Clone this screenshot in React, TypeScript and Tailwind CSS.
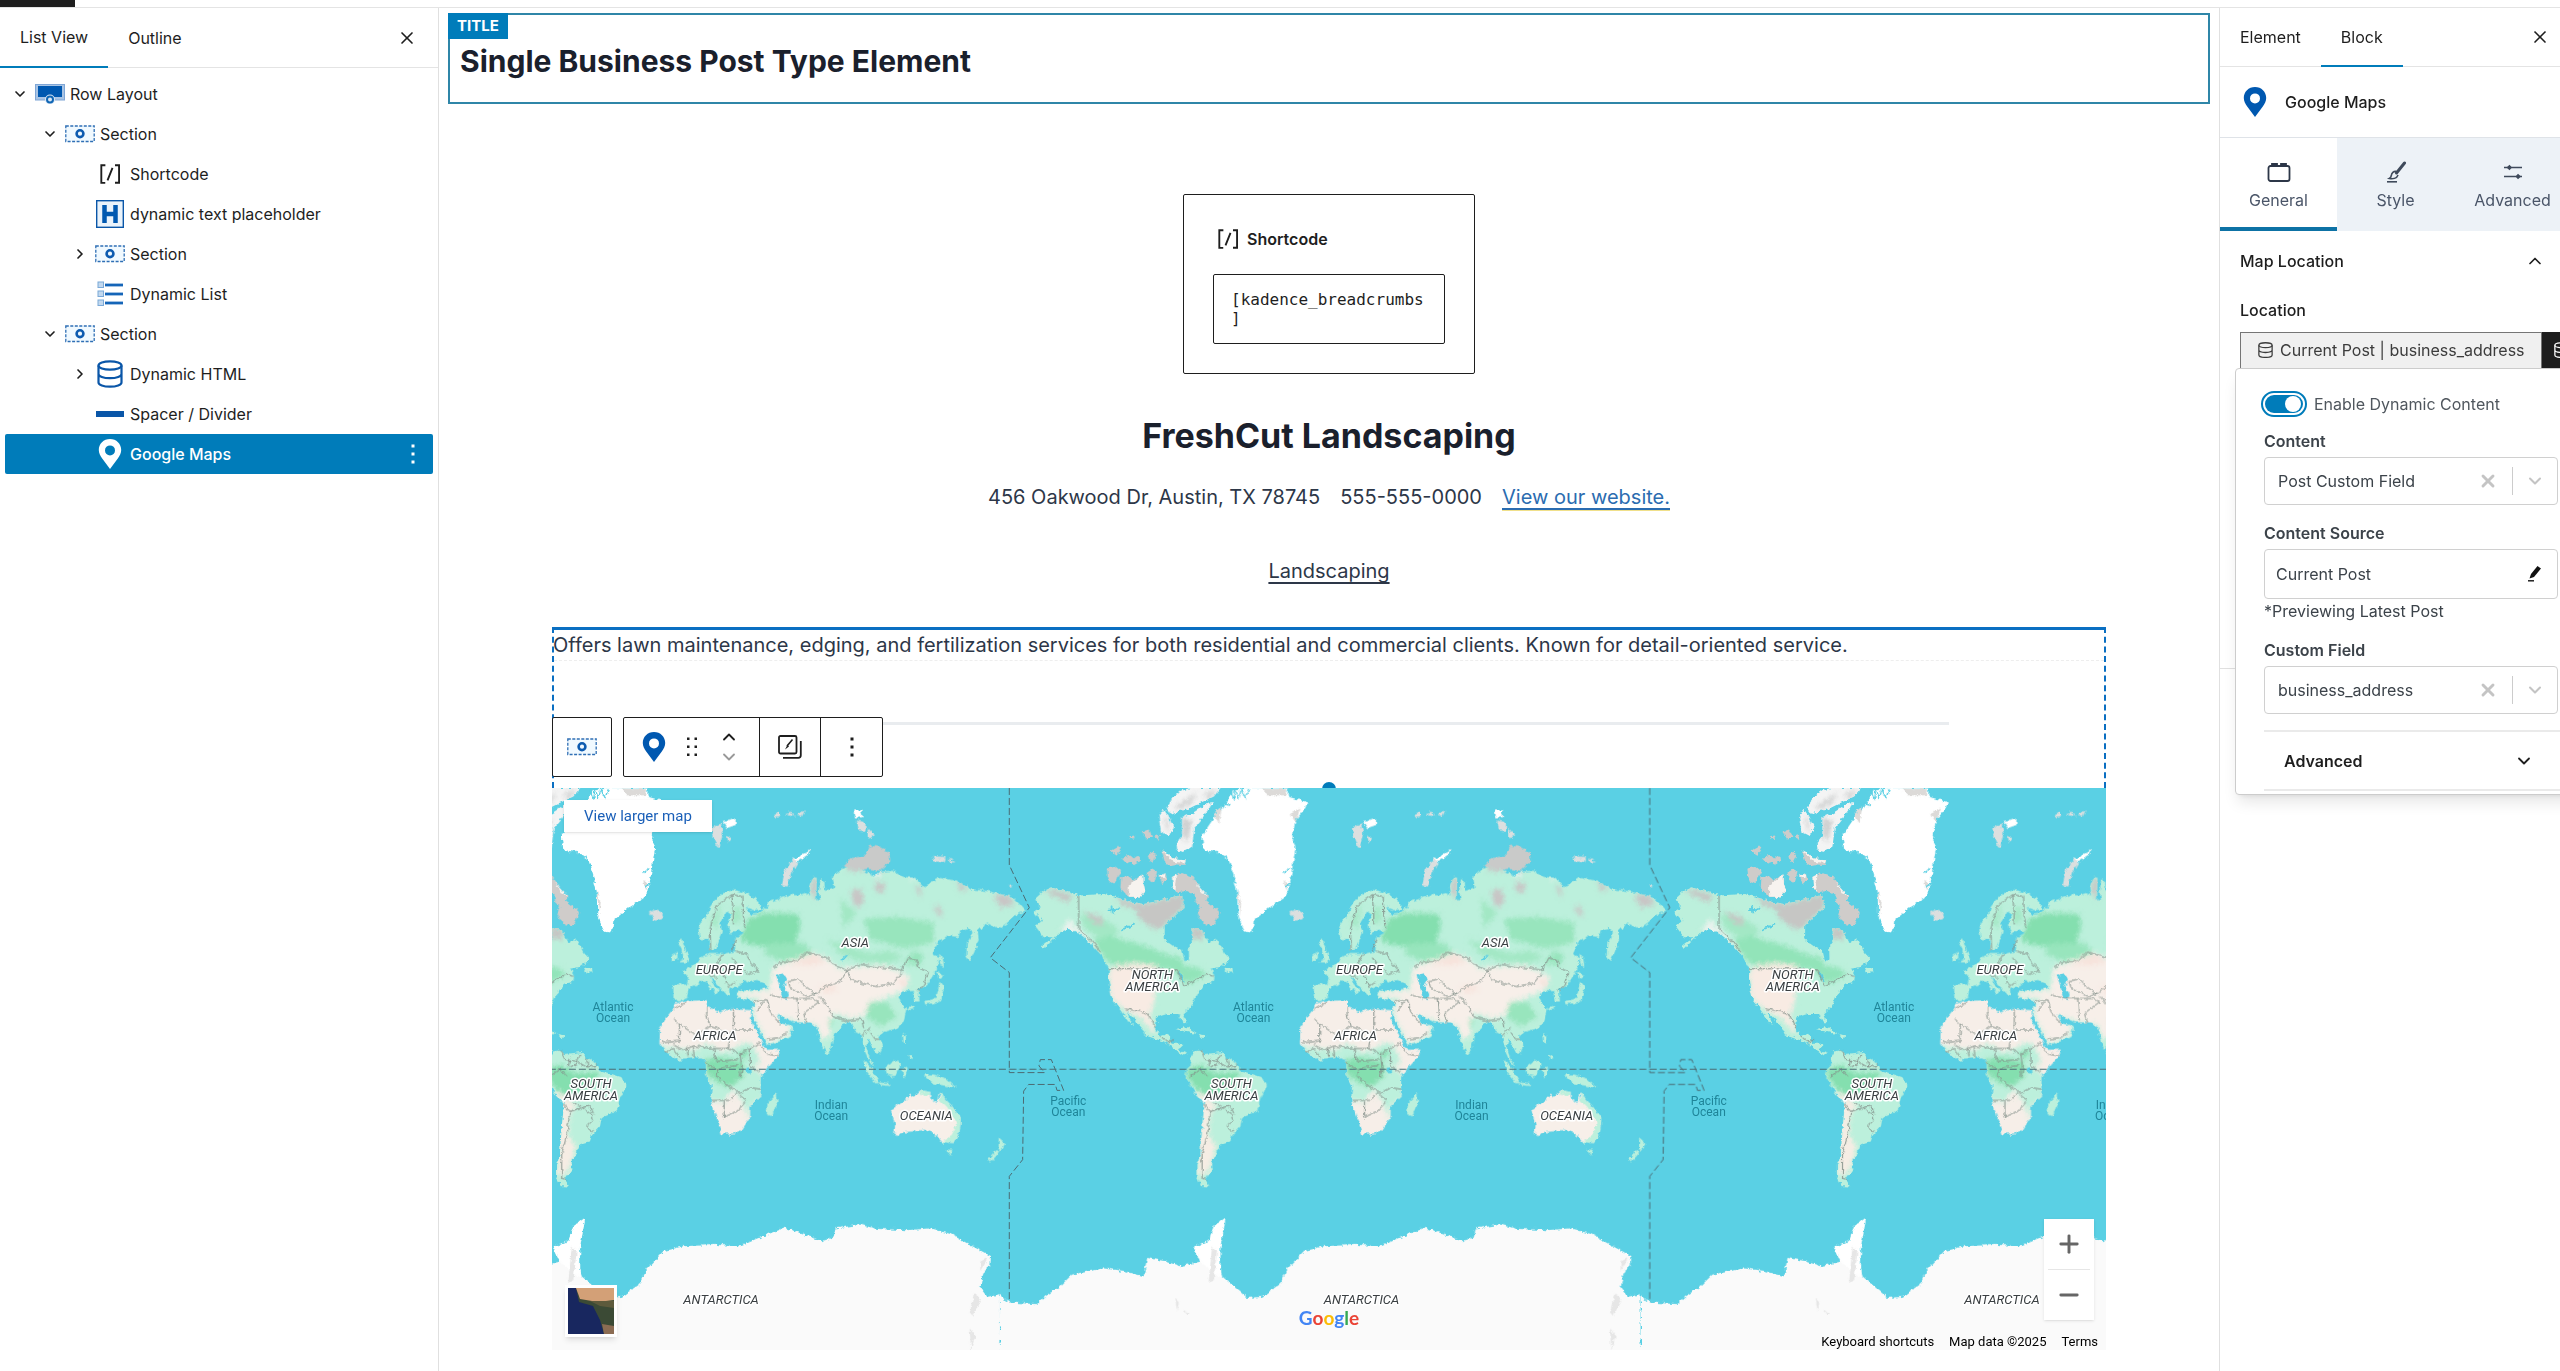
import { ReactNode, useState } from "react";
import { ChevronDown, ChevronRight, ChevronUp, Minus, Plus, X } from "lucide-react";

type IconProps = { className?: string };

/* ---------- Icons ---------- */

function PinIcon({ className }: IconProps) {
  return (
    <svg viewBox="0 0 24 30" className={className} fill="currentColor" aria-hidden="true">
      <path fillRule="evenodd" d="M12 0C5.6 0 .8 4.900.8 11c0 3.200 1.600 6 3.400 8.600L12 30l7.800-10.400C21.600 17 23.200 14.200 23.200 11 23.200 4.900 18.400 0 12 0Zm0 6.400a5 5 0 1 1 0 10 5 5 0 0 1 0-10Z" />
    </svg>
  );
}

function RowIcon() {
  return (
    <svg viewBox="0 0 30 20" className="w-[30px]" aria-hidden="true">
      <rect x="0.500" y="0.500" width="29" height="15.500" fill="#a9c4e4" stroke="#7fa6d6" />
      <rect x="3" y="2" width="24" height="11" fill="#0058b0" />
      <circle cx="15" cy="15.500" r="5" fill="#dbe7f5" />
      <circle cx="15" cy="15.500" r="3" fill="none" stroke="#0f66b5" strokeWidth="2" />
    </svg>
  );
}

function SectionIcon() {
  return (
    <svg viewBox="0 0 30 18" className="w-[30px]" aria-hidden="true">
      <rect x="0.800" y="1" width="28.400" height="15.500" fill="#f0f9ff" stroke="#2f6fb5" strokeWidth="1.300" strokeDasharray="3 1.500" />
      <circle cx="15" cy="8.700" r="3.400" fill="none" stroke="#0d5bb0" strokeWidth="2.600" />
    </svg>
  );
}

function ShortcodeIcon({ className }: IconProps) {
  return (
    <svg viewBox="0 0 24 24" className={className} fill="currentColor" aria-hidden="true">
      <path d="M16 4.200v1.500h2.500v12.500H16v1.500h4V4.200h-4zM4.200 19.800h4v-1.500H5.800V5.800h2.500V4.200h-4v15.600zm5.100-3.100l1.400.6 4-10-1.400-.6-4 10z" />
    </svg>
  );
}

function HeadingIcon() {
  return (
    <svg viewBox="0 0 28 28" className="w-7" aria-hidden="true">
      <rect x="0.700" y="0.700" width="26.600" height="26.600" fill="#eaf3fb" stroke="#0a56a8" strokeWidth="1.400" />
      <path d="M8.500 5v18M19.500 5v18M8.500 14h11" stroke="#0058b0" strokeWidth="4.500" fill="none" />
    </svg>
  );
}

function ListIcon() {
  return (
    <svg viewBox="0 0 28 26" className="w-7" aria-hidden="true">
      {[1, 10, 19].map((y) => (
        <g key={y}>
          <rect x="2" y={y} width="5.500" height="5.500" fill="#c3d9ef" stroke="#7ba9d8" />
          <path d={`M9 ${y + 3}h18`} stroke="#1565b8" strokeWidth="2.800" />
        </g>
      ))}
    </svg>
  );
}

function DatabaseIcon({ className }: IconProps) {
  return (
    <svg viewBox="0 0 26 28" className={className} fill="none" stroke="currentColor" strokeWidth="2.200" aria-hidden="true">
      <ellipse cx="13" cy="5.500" rx="11.500" ry="4.200" />
      <path d="M1.500 5.500v17c0 2.300 5 4.200 11.500 4.200s11.500-1.900 11.500-4.200v-17M1.500 14c0 2.300 5 4.200 11.500 4.200s11.500-1.900 11.500-4.200" />
    </svg>
  );
}

function SpacerIcon() {
  return (
    <svg viewBox="0 0 28 6" className="w-7" aria-hidden="true">
      <rect width="28" height="6" fill="#0a56a8" />
    </svg>
  );
}

function MoreIcon({ className }: IconProps) {
  return (
    <svg viewBox="0 0 4 20" className={className} fill="currentColor" aria-hidden="true">
      <rect x="0.500" y="0.500" width="3" height="3" />
      <rect x="0.500" y="8.500" width="3" height="3" />
      <rect x="0.500" y="16.500" width="3" height="3" />
    </svg>
  );
}

function DragIcon() {
  return (
    <svg viewBox="0 0 12 20" className="w-3" fill="#1e1e1e" aria-hidden="true">
      {[1, 9, 17].map((y) => (
        <g key={y}>
          <rect x="1" y={y - 0.500} width="2.500" height="2.500" />
          <rect x="8.500" y={y - 0.500} width="2.500" height="2.500" />
        </g>
      ))}
    </svg>
  );
}

function CopyStyleIcon() {
  return (
    <svg viewBox="0 0 24 24" className="w-6" fill="none" stroke="#1e1e1e" strokeWidth="1.800" aria-hidden="true">
      <rect x="1" y="1" width="17.500" height="17.500" rx="1.500" />
      <path d="M22.800 6v14.300c0 1.400-1 2.500-2.500 2.500H5" />
      <path d="M14.500 4.500 9 11" strokeWidth="1.600" />
      <path d="M9.500 9.800 7 14.500l4-3z" fill="#1e1e1e" stroke="none" />
    </svg>
  );
}

function BlockIcon() {
  return (
    <svg viewBox="0 0 24 20" className="w-6" fill="none" stroke="#2d3748" strokeWidth="1.800" aria-hidden="true">
      <rect x="1.500" y="4" width="21" height="15" rx="2" />
      <path d="M5 3.200V1.800h5v1.400M14 3.200V1.800h5v1.400" fill="#2d3748" />
    </svg>
  );
}

function BrushIcon() {
  return (
    <svg viewBox="0 0 22 22" className="w-[22px]" fill="none" stroke="#3f4a5b" aria-hidden="true">
      <path d="M19.500 2 11.500 12" strokeWidth="3" strokeLinecap="round" />
      <path d="M11.500 10.500c-3-.5-5 1.500-5.200 4.200-.2 1.600-1 2.300-2 2.800 3.500.8 7.500 0 8.700-3.500" strokeWidth="1.600" />
      <path d="M2 20.800h10" strokeWidth="1.600" />
    </svg>
  );
}

function SlidersIcon() {
  return (
    <svg viewBox="0 0 20 16" className="w-5" stroke="#3f4a5b" strokeWidth="1.600" fill="#3f4a5b" aria-hidden="true">
      <path d="M1 3.500h18M1 12.500h18" />
      <path d="M3.500 3.500 6.500.8l2.500 2.700-2.500 2.700zM12.500 12.500l2.500-2.700 3 2.700-3 2.700z" stroke="none" />
    </svg>
  );
}

function PencilIcon() {
  return (
    <svg viewBox="0 0 14 16" className="w-[14px]" aria-hidden="true">
      <path d="M10.500 0 14 2.500 7 11l-4.500 1.500L4 8z" fill="#111" />
      <path d="M1 14.800h6" stroke="#111" strokeWidth="1.400" />
    </svg>
  );
}

/* ---------- List view ---------- */

type TreeItem = { id: string; label: string; depth: number; icon: ReactNode; state?: "open" | "closed" };

const TREE: TreeItem[] = [
  { id: "row", label: "Row Layout", depth: 0, icon: <RowIcon />, state: "open" },
  { id: "s1", label: "Section", depth: 1, icon: <SectionIcon />, state: "open" },
  { id: "shortcode", label: "Shortcode", depth: 2, icon: <ShortcodeIcon className="w-[30px]" /> },
  { id: "text", label: "dynamic text placeholder", depth: 2, icon: <HeadingIcon /> },
  { id: "s2", label: "Section", depth: 2, icon: <SectionIcon />, state: "closed" },
  { id: "list", label: "Dynamic List", depth: 2, icon: <ListIcon /> },
  { id: "s3", label: "Section", depth: 1, icon: <SectionIcon />, state: "open" },
  { id: "html", label: "Dynamic HTML", depth: 2, icon: <DatabaseIcon className="w-[26px] text-[#0a56a8]" />, state: "closed" },
  { id: "spacer", label: "Spacer / Divider", depth: 2, icon: <SpacerIcon /> },
  { id: "maps", label: "Google Maps", depth: 2, icon: <PinIcon className="w-6" /> },
];

const INDENT = ["pl-0", "pl-[30px]", "pl-[60px]"];

function ListView() {
  const [selected, setSelected] = useState("maps");

  return (
    <aside className="w-[439px] shrink-0 border-r border-[#e0e0e0]">
      <div className="flex h-[60px] items-stretch border-b border-[#e4e4e4]">
        <button className="-mb-px border-b-2 border-[#007cba] px-5">List View</button>
        <button className="px-5">Outline</button>
        <button aria-label="Close" className="ml-auto mr-[21px]"><X className="size-[20px]" strokeWidth={2} /></button>
      </div>
      <ul className="px-[5px] pt-[6px]">
        {TREE.map((item) => {
          const active = item.id === selected;
          return (
            <li key={item.id} className={`flex h-10 items-center rounded-xs pr-[18px] ${INDENT[item.depth]} ${active ? "bg-[#007cba] font-medium text-white" : ""}`}>
              <span className="flex w-[30px] justify-center">
                {item.state === "open" && <ChevronDown className="size-4" strokeWidth={2.500} />}
                {item.state === "closed" && <ChevronRight className="size-4" strokeWidth={2.500} />}
              </span>
              <button onClick={() => setSelected(item.id)} className="flex flex-1 items-center gap-[5px] text-left">
                <span className="flex w-[30px] justify-center">{item.icon}</span>
                {item.label}
              </button>
              {active && <button aria-label="Options"><MoreIcon className="w-1" /></button>}
            </li>
          );
        })}
      </ul>
    </aside>
  );
}

/* ---------- Map ---------- */

const OLD_WORLD =
  "M445 405 450 385 468 370 480 345 500 320 520 305 550 297 575 302 600 310 628 330 632 350 610 352 590 345 600 362 630 358 650 345 655 330 690 320 720 310 745 312 765 305 780 312 775 290 790 262 800 265 798 325 810 325 806 300 812 265 822 275 825 300 852 290 848 262 862 248 890 235 930 240 975 260 990 248 1030 245 1060 262 1095 265 1120 290 1165 265 1220 272 1260 295 1310 300 1350 308 1385 315 1410 338 1427 355 1400 362 1372 385 1345 402 1310 385 1298 402 1282 402 1285 432 1272 465 1258 490 1248 475 1250 440 1270 412 1255 400 1230 405 1225 425 1195 420 1165 435 1147 470 1168 480 1160 510 1130 555 1105 565 1108 598 1092 598 1088 570 1050 572 1045 590 1068 620 1062 650 1040 670 1005 680 985 690 998 715 990 737 975 735 965 715 955 700 948 722 960 755 975 772 962 768 945 735 935 690 915 680 905 655 890 650 870 670 850 690 842 730 830 742 815 715 800 665 780 655 735 655 700 642 680 630 690 657 728 665 720 690 690 705 650 715 640 700 620 660 607 635 612 600 600 592 565 590 560 575 575 566 620 567 655 562 640 548 620 540 600 547 585 540 565 556 540 565 542 582 525 575 510 560 480 530 490 555 510 567 495 577 470 545 455 540 440 552 415 562 412 585 385 598 370 588 370 555 410 552 415 535 400 515 430 500 460 475 480 470 520 470 555 462 555 430 582 412 560 402 545 415 535 400 535 380 545 365 530 355 510 385 515 410 495 455 480 460 475 430 450 430Z";

const ASIA_DRY =
  "M612 600 655 582 668 505 740 482 790 465 830 480 870 510 900 505 1000 500 1055 520 1080 535 1060 570 1000 590 960 600 940 640 900 645 860 630 835 650 842 690 815 700 800 662 735 653 690 638 724 666 716 688 690 702 652 712 622 660 608 635ZM564 573 655 566 655 590 568 588Z";

const AFRICA =
  "M372 605 400 597 470 595 470 612 510 628 525 618 605 622 605 650 630 690 642 715 650 728 690 728 685 745 660 770 632 800 630 855 600 880 600 910 575 945 550 957 515 957 505 925 483 870 485 825 468 795 468 765 455 748 430 750 385 758 350 735 328 710 330 670 350 640 372 615Z";

const AFRICA_GREEN =
  "M320 720 370 722 430 730 470 712 520 738 590 708 612 722 632 765 605 770 640 800 640 855 600 880 595 915 575 865 545 832 525 868 478 866 475 825 458 795 458 765 455 758 430 760 385 768 340 745Z";

const ISLANDS_GREEN =
  "M382 492 402 482 394 458 384 440 396 430 406 458 417 482 410 493ZM365 475 382 463 382 485 365 488ZM652 870 680 845 682 868 665 908 650 902ZM1168 545 1181 560 1172 598 1125 606 1122 597 1158 590ZM1160 518 1182 530 1165 540ZM1163 470 1176 475 1181 505 1172 500ZM1058 682 1067 692 1066 715 1060 708ZM1075 738 1088 742 1086 756 1077 752ZM938 752 965 780 987 815 975 816 948 785ZM985 816 1020 822 1020 827 985 822ZM1005 776 1042 754 1050 770 1035 800 1012 797ZM1056 782 1072 776 1065 802 1058 800ZM1120 795 1150 795 1187 806 1217 830 1180 825 1150 820ZM1188 998 1207 998 1202 1010 1193 1008ZM1345 968 1364 982 1353 1000 1345 997ZM1310 1030 1340 998 1346 1006 1325 1028ZM1082 608 1092 616 1068 620Z";

const ISLANDS_GREY =
  "M296 358 320 350 341 362 336 376 314 380ZM695 286 704 248 728 215 780 190 770 206 742 222 724 250 712 288ZM912 80 932 80 937 100 918 104ZM920 110 946 115 946 138 926 137ZM955 132 974 150 956 158ZM1148 206 1186 208 1184 222 1152 220ZM1196 212 1216 222 1198 222ZM484 130 512 118 518 145 508 182 496 175ZM518 112 556 104 556 122 530 130ZM530 150 545 158 535 170ZM672 92 688 86 690 98 676 100ZM706 90 722 86 734 98 714 96ZM740 94 764 82 756 98ZM672 96 680 98 676 102ZM1376 284 1390 288 1380 292Z";

const AUSTRALIA =
  "M1022 890 1060 868 1080 850 1090 855 1110 838 1140 842 1140 860 1160 872 1172 840 1185 862 1205 880 1232 915 1228 950 1210 980 1175 978 1160 960 1140 950 1125 944 1070 950 1045 958 1032 955 1035 930Z";

const NORTH_AMERICA =
  "M105 320 130 300 155 290 195 300 235 312 270 310 310 308 340 315 400 330 430 335 480 325 545 310 550 345 520 370 490 395 490 430 520 450 545 460 553 490 566 485 565 445 577 430 575 400 605 405 625 438 650 430 670 465 690 485 660 505 630 510 642 530 640 545 615 550 590 575 575 610 550 630 557 655 545 652 535 632 500 632 470 640 465 670 480 692 502 685 510 695 515 712 545 712 535 730 562 740 550 744 525 730 505 712 475 702 435 690 425 670 377 622 397 662 386 656 355 615 335 590 325 545 325 510 305 475 270 440 235 412 200 402 175 415 130 457 124 450 160 425 130 425 105 395 125 380 100 355 120 345Z";

const ARCTIC_GREY =
  "M515 262 540 250 578 262 600 290 622 312 618 328 650 350 657 358 640 395 618 392 600 378 592 362 600 340 586 328 582 310 560 300 530 303 517 290ZM320 240 345 234 362 246 350 272 330 282 322 262ZM362 262 385 260 400 272 428 252 430 285 437 300 415 318 385 318 360 292ZM440 250 455 242 470 250 462 278 445 270ZM478 258 495 252 500 268 485 282ZM482 190 505 200 520 212 556 214 552 230 520 228 498 232ZM332 192 356 180 364 192 350 202ZM365 210 390 204 400 212 415 202 418 218 400 228 375 220ZM442 202 458 194 466 204 456 222 446 216ZM386 152 404 150 400 160ZM425 140 445 134 455 155 438 158ZM462 152 478 148 474 162Z";

const GREENLAND =
  "M685 50 700 28 730 22 775 22 862 24 862 45 920 60 915 75 885 110 875 150 885 185 875 240 865 300 850 320 805 345 780 365 760 380 756 412 735 410 712 370 710 300 700 260 685 215 650 195 610 190 605 150 635 110 670 75Z";

const ELLESMERE =
  "M498 75 520 45 545 28 570 22 660 22 640 45 600 62 560 80 530 85 510 92ZM475 100 490 80 505 100 520 130 505 150 482 140ZM545 100 575 90 625 62 640 60 600 110 582 130 575 180 550 195 530 190 528 170 545 150Z";

const SOUTH_AMERICA =
  "M570 745 580 730 600 728 610 740 665 735 680 750 710 765 718 785 745 792 790 805 800 825 780 860 770 895 725 910 720 935 695 960 690 975 655 985 650 1010 635 1022 635 1050 620 1070 612 1080 630 1098 605 1096 588 1070 588 1040 600 1010 605 940 612 875 580 840 555 800 560 780 572 770Z";

const ANTARCTICA =
  "M-570 1388-545 1410-460 1415-430 1390-395 1370-355 1335-260 1318-200 1325-140 1340-130 1290-80 1298-30 1312 30 1300 10 1260 55 1245 70 1205 105 1182 90 1260 90 1320 95 1340 170 1398 215 1395 270 1360 290 1320 340 1272 400 1258 500 1255 570 1258 630 1235 700 1208 760 1225 815 1245 850 1235 855 1210 930 1200 980 1212 1070 1215 1140 1210 1200 1225 1270 1260 1322 1285 1320 1310 1300 1325 1290 1370 1310 1395 1350 1388V1640H-570Z";

const BORDERS =
  "M668 505 700 490 740 490 770 465 830 480 850 497 890 515 930 498 980 505 1020 508 1055 515 1075 480 1095 485 1110 510 1135 518 1120 555 1100 572M890 515 905 540 940 550 980 558 1030 548 1055 520M890 515 870 545 820 560 800 580 770 560 745 540 715 545 720 560 770 585 800 575M740 590 745 650M740 590 790 590 805 600 760 630 770 655M808 585 835 615 850 640 890 650 935 645 940 670M660 580 700 590 740 590M610 600 650 590 660 625 690 660M620 628 640 598M650 700 690 695 712 680M482 460 480 400 500 340 545 310 578 315 580 370 585 400M545 310 550 360 550 390M440 500 470 520 500 500 520 470M555 462 590 470 600 490 625 515 595 525 560 500 545 480M520 520 535 560 555 545M475 525 500 535M560 430 545 460M372 620 410 600M372 645 388 660 388 705 335 710M388 660 440 690 480 665 470 635 470 612M480 665 540 685 550 675 550 620M550 675 605 675M540 685 535 725 490 725 430 718 400 730 370 715M535 725 570 740 600 725 625 710 650 740 685 745M600 725 600 770 630 790M570 740 575 780 570 800M490 725 500 760 565 755M468 765 500 780 565 770M505 780 500 800 540 830 570 845 600 830 632 835M485 865 540 865 560 845 590 865M522 868 522 910 560 895 585 870M345 735 370 725 390 750M410 720 415 750M430 720 432 750M960 680 975 700 990 700M935 690 960 668";

const AMERICA_BORDERS =
  "M235 312V405L270 430 300 465M325 510H470L530 515 550 555 585 540 620 525 640 530M375 618 420 625 450 638 465 670M480 692 505 710 520 700M600 728 615 755 650 760 680 775 715 770M570 800 600 780 620 800M630 750 625 775 650 770 660 740M680 750 685 780M612 875 630 895 622 950 605 1010 605 1075 620 1080M630 895 665 885 690 900 698 920 680 935 700 950M640 870 665 885 690 880 700 900";

function WorldLand() {
  return (
    <g>
      <g filter="url(#coast)">
        <path d={ISLANDS_GREEN} fill="#bcf0dc" />
        <path d={ISLANDS_GREY} fill="#dcdfdf" />
        <path d="M742 222 728 215 780 190 770 206ZM912 80 932 80 937 100 918 104ZM518 112 556 104 556 122 530 130Z" fill="#fff" />
        <path d="M880 232 900 212 945 205 960 178 985 180 1018 195 1020 220 990 245 950 240 920 245Z" fill="#c9cac9" />
        <path d={OLD_WORLD} fill="#bcf0dc" />

        {/* Eurasian vegetation and uplands */}
        <g clipPath="url(#eurasia)">
          <g filter="url(#soft)">
            <path d="M595 375 640 360 745 362 750 400 735 440 660 450 600 445 570 430Z" fill="#84dfaf" />
            <path d="M940 375 1040 370 1150 385 1150 440 1060 455 960 430ZM660 440 760 440 800 480 750 480 700 490 640 470ZM1060 495 1110 500 1120 470 1090 460ZM950 600 1010 600 1040 640 990 665 950 640ZM820 640 850 650 830 690Z" fill="#98e5bd" />
            <path d="M830 430 900 450 960 470 1010 460 1060 475 1020 495 930 490 870 470ZM480 390 515 330 500 400ZM548 350 570 340 575 380 550 390ZM870 320 920 360 880 400Z" fill="#a3e8c5" />
            <path d="M880 225 1020 225 990 250 950 242 900 248ZM900 300 935 295 940 335 915 345ZM975 275 1005 280 1000 305 975 300ZM1330 312 1370 308 1395 335 1350 345ZM1150 340 1170 345 1180 368 1160 362ZM785 265 802 268 798 325 780 300ZM1220 272 1255 292 1230 302ZM1095 290 1110 285 1115 320Z" fill="#c9c6c6" />
            <path d="M965 240 995 248 980 268ZM1075 245 1095 262 1085 275Z" fill="#f0f0f0" />
            <path d={ASIA_DRY} fill="#f7efe9" />
            <path d="M800 560 840 555 870 565 830 575ZM720 500 790 470 830 490 780 500ZM1040 540 1075 538 1060 560Z" fill="#f7e3dc" />
          </g>
        </g>
        <path d="M678 530 700 522 712 540 700 556 716 578 712 594 696 590 690 560Z" fill="#5ad0e4" />
        <path d="M870 485 895 468 892 474 876 490Z" fill="#5ad0e4" />

        <path d={AFRICA} fill="#f6eee8" />
        <g clipPath="url(#africa)">
          <g filter="url(#soft)">
            <path d={AFRICA_GREEN} fill="#bcf0dc" />
            <path d="M460 755 520 748 580 762 580 800 540 830 500 815 470 795ZM560 735 600 730 585 755Z" fill="#84dfaf" />
          </g>
        </g>
        <path d="M588 780 600 778 602 792 590 792Z" fill="#5ad0e4" />
        <path d="M602 640 620 668 648 722" fill="none" stroke="#5ad0e4" strokeWidth="9" />

        <path d={AUSTRALIA} fill="#f7efe9" />
        <path d="M1110 838 1140 842 1138 852 1108 850ZM1172 840 1185 862 1205 880 1232 915 1228 950 1210 980 1175 978 1205 960 1218 925 1190 885 1168 865Z" fill="#bcf0dc" />

        <g transform="translate(1350 0)">
          <path d={NORTH_AMERICA} fill="#bcf0dc" />
          <g clipPath="url(#north-america)">
            <g filter="url(#soft)">
              <path d="M280 440 310 410 360 430 440 450 490 470 540 480 550 500 600 510 620 525 560 550 520 515 400 500 340 500 310 480Z" fill="#92e4b9" />
              <path d="M240 360 320 380 360 410 300 430 250 400Z" fill="#a3e8c5" />
              <path d="M345 315 400 330 430 335 480 325 550 305 550 345 520 370 490 395 470 405 440 390 415 372 405 350 360 335ZM575 395 605 400 612 428 575 430ZM250 355 300 368 310 395 280 385ZM130 300 160 295 220 312 200 330Z" fill="#c6c6c4" />
              <path d="M325 515 345 502 400 495 470 500 462 600 448 632 470 690 440 665 425 645 370 620 330 590Z" fill="#f8ebe3" />
              <path d="M180 410 205 375 250 415 300 470 290 475 235 425Z" fill="#e9f3ee" />
            </g>
          </g>
          <path d={ARCTIC_GREY} fill="#cfccca" />
          <path d="M385 285 410 268 428 252 430 285 437 300 415 318 385 318ZM515 262 530 255 525 300 517 290ZM585 275 600 290 622 312 605 306ZM482 190 505 200 520 212 556 214 552 224 520 222ZM478 258 495 252 490 268Z" fill="#f7f3ef" />
          <path d="M325 348 345 352 358 345M332 340 338 360M365 404 380 398 400 390M535 520 550 545" fill="none" stroke="#5ad0e4" strokeWidth="5" />
          <path d="M525 672 560 667 592 685 570 683ZM592 686 620 690 608 697ZM672 508 695 505 698 520 680 520Z" fill="#bcf0dc" />
          <path d={ELLESMERE} fill="#f4f4f4" />
          <g clipPath="url(#ellesmere)">
            <path d="M520 75 590 35 575 60 540 80ZM545 100 575 110 560 170 545 150ZM610 40 650 25 625 55ZM490 95 505 115 500 145Z" fill="#cfd0d0" filter="url(#soft)" />
          </g>
          <path d={GREENLAND} fill="#fff" />
          <path d="M785 24 858 26 855 42 800 42ZM640 90 665 70 655 120ZM868 90 900 75 885 115ZM710 300 722 330 718 365ZM850 270 862 280 855 300Z" fill="#dcdad8" />
          <path d="M690 25 700 55 705 25 715 50 722 25 735 48 745 25M655 60 690 70M868 240 850 250M872 280 852 290" fill="none" stroke="#5ad0e4" strokeWidth="4" />
          <path d={SOUTH_AMERICA} fill="#bcf0dc" />
          <g clipPath="url(#south-america)">
            <g filter="url(#soft)">
              <path d="M555 785 600 768 640 790 720 788 700 830 640 850 600 845 570 815Z" fill="#84dfaf" />
              <path d="M576 842 612 850 650 880 630 900 625 960 645 985 640 1020 620 1065 590 1065 595 1010 600 940 604 875Z" fill="#f6ede4" />
            </g>
          </g>
        </g>
        <path d={ANTARCTICA} fill="#fafafa" />
        <path d="M30 1300 10 1260 55 1245 70 1205 105 1182 90 1260 90 1320 95 1340 60 1330Z" fill="#fff" />
        <path d="M65 1260 80 1270 70 1350 55 1355ZM1290 1300 1312 1290 1290 1325ZM1270 1385 1292 1400 1268 1450 1258 1440ZM1258 1480 1275 1500 1262 1540ZM-45 1400-35 1410-40 1435ZM-20 1432-5 1440-15 1442Z" fill="#e6e6e6" />
      </g>
      <g fill="none" stroke="#84908a" strokeWidth="1" filter="url(#coast)">
        <path d={BORDERS} vectorEffect="non-scaling-stroke" />
        <path d={AMERICA_BORDERS} transform="translate(1350 0)" vectorEffect="non-scaling-stroke" />
      </g>
      <path
        d="M1377 22V230L1437 345 1320 480 1377 520V790H1483L1466 772 1470 755H1503L1540 838H1520L1515 822H1435L1420 840 1417 1025 1377 1070V1560"
        fill="none" stroke="#4c6b73" strokeWidth="1" strokeDasharray="7 3" vectorEffect="non-scaling-stroke"
      />
      <path d="M-543 781H1377" stroke="#4c6b73" strokeWidth="1" strokeDasharray="7 3" vectorEffect="non-scaling-stroke" />
    </g>
  );
}

const CONTINENTS = [
  { x: 855, y: 947, lines: ["ASIA"] },
  { x: 719, y: 974, lines: ["EUROPE"] },
  { x: 715, y: 1040, lines: ["AFRICA"] },
  { x: 926, y: 1120, lines: ["OCEANIA"] },
  { x: 1231, y: 1088, lines: ["SOUTH", "AMERICA"] },
  { x: 1152, y: 979, lines: ["NORTH", "AMERICA"] },
  { x: 721, y: 1304, lines: ["ANTARCTICA"] },
];

const OCEANS = [
  { x: 1253, y: 1011, name: "Atlantic" },
  { x: 831, y: 1109, name: "Indian" },
  { x: 1068, y: 1105, name: "Pacific" },
];

const WORLDS = [-640, 0, 640, 1280];

// every label once per copy of the world that shows it
const repeat = <T extends { x: number }>(labels: T[]) =>
  WORLDS.flatMap((dx) => labels.map((l) => ({ ...l, x: l.x + dx }))).filter((l) => l.x > 560 && l.x < 2120);

function WorldMap() {
  return (
    <svg viewBox="552 788 1553 562" preserveAspectRatio="xMidYMid slice" className="h-[562px] w-full bg-[#5ad0e4]" role="img" aria-label="World map">
      <defs>
        <filter id="coast" x="-5%" y="-5%" width="110%" height="110%">
          <feTurbulence type="fractalNoise" baseFrequency="0.080" numOctaves="3" seed="4" result="noise" />
          <feDisplacementMap in="SourceGraphic" in2="noise" scale="14" xChannelSelector="R" yChannelSelector="G" />
        </filter>
        <filter id="soft" x="-10%" y="-10%" width="120%" height="120%">
          <feGaussianBlur stdDeviation="7" />
        </filter>
        <clipPath id="eurasia"><path d={OLD_WORLD} /></clipPath>
        <clipPath id="africa"><path d={AFRICA} /></clipPath>
        <clipPath id="north-america"><path d={NORTH_AMERICA} /></clipPath>
        <clipPath id="south-america"><path d={SOUTH_AMERICA} /></clipPath>
        <clipPath id="ellesmere"><path d={ELLESMERE} /></clipPath>
      </defs>
      {WORLDS.map((dx) => (
        <g key={dx} transform={`translate(${550 + dx} 780) scale(0.33333 0.37037)`}>
          <WorldLand />
        </g>
      ))}
      <g textAnchor="middle" fontSize="13" fontStyle="italic" fill="#3a3f42" stroke="#fff" strokeWidth="3" paintOrder="stroke" strokeLinejoin="round">
        {repeat(CONTINENTS).map((c) =>
          c.lines.map((line, i) => (
            <text key={line + c.x} x={c.x} y={c.y + i * 12}>{line}</text>
          ))
        )}
      </g>
      <g textAnchor="middle" fontSize="12" fill="#1f8599">
        {repeat(OCEANS).map((o) => (
          <g key={o.name + o.x}>
            <text x={o.x} y={o.y}>{o.name}</text>
            <text x={o.x} y={o.y + 11}>Ocean</text>
          </g>
        ))}
      </g>
    </svg>
  );
}

function GoogleMap() {
  return (
    <div className="relative overflow-hidden font-[Roboto,sans-serif]">
      <WorldMap />
      <a href="#larger" className="absolute left-3 top-3 flex h-8 items-center bg-white px-5 text-[15px] text-[#1a5fb8] shadow-sm">View larger map</a>

      {/* Satellite switch */}
      <button aria-label="Show satellite imagery" className="absolute bottom-[13px] left-[13px] size-[52px] border-3 border-white shadow-md">
        <svg viewBox="0 0 46 46" className="size-full" preserveAspectRatio="none" aria-hidden="true">
          <rect width="46" height="46" fill="#18275f" />
          <path d="M8 0h38v46H36l-4-14-7-14-14-4Z" fill="#3b4a35" />
          <path d="M8 0h38v12l-16 2-18-3Z" fill="#d3a077" />
          <path d="M22 13h24v7l-14-2Z" fill="#5d5a3c" />
          <path d="M34 36l12 2v8H36Z" fill="#8b6c53" />
        </svg>
      </button>

      <div className="absolute right-3 top-[431px] flex h-[101px] w-[50px] flex-col bg-white text-[#666] shadow-sm">
        <button aria-label="Zoom in" className="flex flex-1 items-center justify-center"><Plus className="size-7" strokeWidth={2.500} /></button>
        <div className="mx-1 h-px bg-[#e6e6e6]" />
        <button aria-label="Zoom out" className="flex flex-1 items-center justify-center"><Minus className="size-7" strokeWidth={2.500} /></button>
      </div>

      {/* Attribution */}
      <a href="#google" aria-label="Google" className="absolute bottom-[18px] left-1/2 -translate-x-1/2 font-[Lato,sans-serif] text-[19px] leading-7 font-bold">
        <span className="text-[#4285f4]">G</span>
        <span className="text-[#ea4335]">o</span>
        <span className="text-[#fbbc05]">o</span>
        <span className="text-[#4285f4]">g</span>
        <span className="text-[#34a853]">l</span>
        <span className="text-[#ea4335]">e</span>
      </a>
      <div className="absolute bottom-0 right-0 flex h-4 items-center gap-[15px] px-2 text-[13px] text-black">
        <button>Keyboard shortcuts</button>
        <span>Map data ©2025</span>
        <a href="#terms">Terms</a>
      </div>
    </div>
  );
}

/* ---------- Canvas ---------- */

function BlockToolbar() {
  return (
    <div className="absolute bottom-[11px] -left-0.5 flex h-[60px] gap-[11px] text-[#1e1e1e]">
      <button aria-label="Select parent block: Section" className="flex w-[60px] items-center justify-center rounded-xs border border-[#1e1e1e] bg-white">
        <SectionIcon />
      </button>
      <div className="flex divide-x divide-[#1e1e1e] rounded-xs border border-[#1e1e1e] bg-white">
        <div className="flex w-[136px] items-center pl-[18px]">
          <button aria-label="Google Maps"><PinIcon className="w-6 text-[#0058b0]" /></button>
          <button aria-label="Drag" className="ml-5"><DragIcon /></button>
          <div className="ml-[21px] flex flex-col">
            <button aria-label="Move up"><ChevronUp className="size-5" strokeWidth={2.200} /></button>
            <button aria-label="Move down" className="text-[#999]"><ChevronDown className="size-5" strokeWidth={2.200} /></button>
          </div>
        </div>
        <button aria-label="Copy styles" className="flex w-[61px] items-center justify-center"><CopyStyleIcon /></button>
        <button aria-label="Options" className="flex w-[61px] items-center justify-center"><MoreIcon className="w-1" /></button>
      </div>
    </div>
  );
}

function Canvas() {
  return (
    <main className="min-w-0 flex-1 px-[9px] pt-[5px] text-[#2d3748]">
      <div className="relative h-[91px] border-2 border-[#2f86a8] pl-[10px] pt-[26px]">
        <span className="absolute -left-0.5 -top-0.5 flex h-[26px] items-center bg-[#007cba] px-[9px] text-[15px] font-bold text-white">TITLE</span>
        <h1 className="text-[30px] leading-10 font-bold text-[#1a202c]">Single Business Post Type Element</h1>
      </div>

      <div className="mx-[104px]">
        <div className="mt-[90px] flex flex-col items-center">
          <div className="h-[180px] w-[292px] rounded-xs border border-[#1e1e1e] px-[29px] pt-[29px] text-[#1e1e1e]">
            <label htmlFor="shortcode" className="flex h-[30px] items-center gap-1 font-semibold">
              <ShortcodeIcon className="w-[30px]" /> Shortcode
            </label>
            <textarea
              id="shortcode"
              defaultValue="[kadence_breadcrumbs]"
              className="mt-5 block h-[70px] w-full resize-none overflow-hidden rounded-xs border border-[#1e1e1e] px-[17px] py-[15px] font-['DejaVu_Sans_Mono',monospace] text-[16px] leading-[19px] [line-break:anywhere] outline-none"
            />
          </div>
          <h2 className="mt-[38px] text-[34px] leading-[48px] font-bold text-[#1a202c]">FreshCut Landscaping</h2>
          <div className="mt-[21px] flex gap-5 text-[20px] leading-8">
            <span>456 Oakwood Dr, Austin, TX 78745</span>
            <span>555-555-0000</span>
            <a href="#website" className="h-[30px] border-b-3 border-[#f0e08a] text-[#2b6cb0] underline underline-offset-4">View our website.</a>
          </div>
          <a href="#landscaping" className="mt-[42px] text-[20px] leading-8 underline underline-offset-4">Landscaping</a>
        </div>

        {/* Selected section */}
        <section className="mt-10">
          <div className="relative h-[161px] border-x-2 border-t-3 border-dashed border-[#0a6fc2] [border-top-style:solid]">
            <p className="-ml-px text-[20px] leading-[30px]">
              Offers lawn maintenance, edging, and fertilization services for both residential and commercial clients. Known for detail-oriented service.
            </p>
            <div className="border-t border-dashed border-[#eee]" />
            <hr className="mx-auto mt-[61px] w-4/5 border-t-3 border-[#e9ecef]" />
            <div className="absolute -bottom-2 left-1/2 size-[14px] -translate-x-1/2 rounded-full bg-[#007cba]" />
            <BlockToolbar />
          </div>
          <GoogleMap />
        </section>
      </div>
    </main>
  );
}

/* ---------- Inspector ---------- */

function DynamicSelect({ id, label, value }: { id: string; label: string; value: string }) {
  return (
    <div>
      <label htmlFor={id} className="block h-8 leading-8 font-semibold">{label}</label>
      <div className="flex h-12 w-[294px] items-center rounded border border-[#d0d0d0] bg-white">
        <select id={id} className="h-full flex-1 appearance-none px-[13px] outline-none">
          <option>{value}</option>
        </select>
        <button aria-label="Clear" className="pr-[14px] pl-3 text-[#c4c4c4]"><X className="size-5" strokeWidth={3.500} /></button>
        <span className="h-7 w-px bg-[#ccc]" />
        <ChevronDown className="mx-3 size-5 text-[#c4c4c4]" strokeWidth={2.500} />
      </div>
    </div>
  );
}

function DynamicPopover() {
  const [enabled, setEnabled] = useState(true);

  return (
    <div className="absolute left-[15px] top-[360px] h-[427px] w-[360px] rounded-sm border border-[#ccc] bg-white pl-[28px] pt-[22px] text-[#3c434a] shadow-lg">
      <label className="flex h-[26px] items-center gap-[7px] text-[#50575e]">
        <input type="checkbox" checked={enabled} onChange={(e) => setEnabled(e.target.checked)} className="peer sr-only" />
        <span className="-ml-[3px] flex h-[26px] w-[46px] items-center justify-end rounded-full border-2 border-[#007cba] p-0.5">
          <span className="flex size-full items-center justify-end rounded-full bg-[#007cba] p-0.5">
            <span className="size-4 rounded-full bg-white" />
          </span>
        </span>
        Enable Dynamic Content
      </label>
      <div className="mt-2">
        <DynamicSelect id="content" label="Content" value="Post Custom Field" />
      </div>
      <div className="mt-3">
        <span className="block h-8 leading-8 font-semibold">Content Source</span>
        <button className="flex h-[50px] w-[294px] items-center justify-between rounded border border-[#d0d0d0] pl-[11px] pr-4 text-left">
          Current Post <PencilIcon />
        </button>
        <p className="leading-6">*Previewing Latest Post</p>
      </div>
      <div className="mt-[11px]">
        <DynamicSelect id="field" label="Custom Field" value="business_address" />
      </div>
      <button className="mt-4 flex h-[61px] w-full items-center justify-between border-y-2 border-[#eaeaea] pl-5 pr-[60px] font-semibold text-[#1e1e1e]">
        Advanced <ChevronDown className="size-5" strokeWidth={2.200} />
      </button>
    </div>
  );
}

const PANEL_TABS = [
  { label: "General", icon: <BlockIcon /> },
  { label: "Style", icon: <BrushIcon /> },
  { label: "Advanced", icon: <SlidersIcon /> },
];

function Inspector() {
  return (
    <aside className="relative w-[341px] shrink-0 overflow-hidden border-l border-[#e0e0e0] text-[#1e1e1e]">
      <div className="flex h-[59px] items-stretch border-b border-[#e4e4e4]">
        <button className="px-5">Element</button>
        <button className="-mb-px border-b-2 border-[#007cba] px-5">Block</button>
        <button aria-label="Close" className="ml-auto mr-[10px]"><X className="size-[20px]" strokeWidth={2} /></button>
      </div>
      <div className="flex h-[70px] items-center gap-[18px] pl-[23px] font-medium">
        <PinIcon className="w-6 text-[#0058b0]" /> Google Maps
      </div>
      <div className="grid h-[94px] w-[351px] grid-cols-3 border-t border-[#dfe3e8] text-[#4a5568]">
        {PANEL_TABS.map((tab, i) => (
          <button key={tab.label} className={`flex flex-col items-center gap-1 pt-[22px] ${i === 0 ? "border-b-4 border-[#0d72a5] bg-white" : "bg-[#edf2f7]"}`}>
            <span className="flex h-6 items-center">{tab.icon}</span>
            {tab.label}
          </button>
        ))}
      </div>

      <div className="h-[438px] border-b border-[#e0e0e0] pl-5">
        <button className="flex h-[60px] w-full items-center justify-between pr-[15px] font-medium">
          Map Location <ChevronUp className="size-5" />
        </button>
        <span className="block h-[41px] leading-[38px] font-medium">Location</span>
        <div className="flex h-10 w-[360px]">
          <button className="flex w-[302px] items-center gap-[7px] border border-[#757575] bg-[#f0f0f0] pl-[17px] pb-1 text-[#3c3c3c]">
            <DatabaseIcon className="w-[15px]" /> Current Post | business_address
          </button>
          <button aria-label="Dynamic content" className="flex flex-1 items-center bg-[#1e1e1e] pl-3 pb-1 text-white">
            <DatabaseIcon className="w-[15px]" />
          </button>
        </div>
      </div>
      <DynamicPopover />
    </aside>
  );
}

export default function App() {
  return (
    <div className="flex min-h-screen flex-col overflow-hidden bg-white font-[Inter,sans-serif] text-[16px] leading-6 text-[#1e1e1e]">
      <div className="h-2 border-b border-[#e4e4e4]">
        <div className="h-[7px] w-[75px] bg-[#1e1e1e]" />
      </div>
      <div className="flex flex-1">
        <ListView />
        <Canvas />
        <Inspector />
      </div>
    </div>
  );
}
